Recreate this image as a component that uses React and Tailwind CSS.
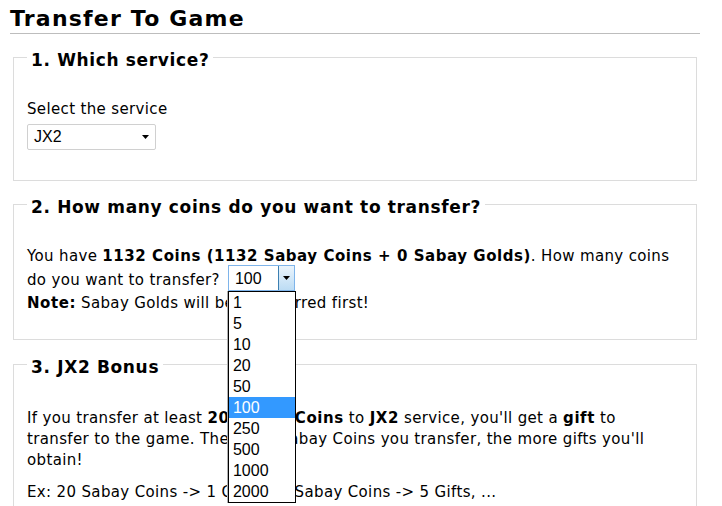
import React from "react";

const opts = ["1", "5", "10", "20", "50", "100", "250", "500", "1000", "2000"];

function Triangle() {
  return (
    <svg width="7" height="4" viewBox="0 0 7 4" className="block">
      <polygon points="0,0 7,0 3.5,4" fill="#000" />
    </svg>
  );
}

function B({ children }) {
  return <b className="font-bold tracking-[0.55px]">{children}</b>;
}

export default function App() {
  return (
    <div className="bg-white w-[722px] h-[506px] overflow-hidden text-black font-['DejaVu_Sans',Verdana,sans-serif]">
      <div className="pl-[10px] pr-[22px]">
        <h1 className="text-[22px] font-bold tracking-[1.2px] leading-[26px] pt-[6px] pb-[1px] border-b border-[#bdbdbd]">
          Transfer To Game
        </h1>

        <fieldset className="mt-[9px] mx-[3px] border border-[#dcdcdc] pl-[13px] pr-[15px] pb-[30px]">
          <legend className="px-[4px] pt-[6px] text-[17px] font-bold tracking-[0.65px] leading-[22px]">1. Which service?</legend>
          <div className="pt-[27px] text-[15px] tracking-[0.35px] leading-[22px]">Select the service</div>
          <div className="mt-[4px] w-[129px] h-[26px] border border-[#d0d0d0] rounded-[2px] flex items-center justify-between pl-[6px] pr-[6px] font-['Liberation_Sans',Arial,sans-serif] text-[16px]">
            <span>JX2</span>
            <Triangle />
          </div>
        </fieldset>

        <fieldset className="mt-[9px] mx-[3px] border border-[#dcdcdc] pl-[13px] pr-[15px] pb-[25px]">
          <legend className="px-[4px] pt-[6px] text-[17px] font-bold tracking-[0.65px] leading-[22px]">2. How many coins do you want to transfer?</legend>
          <div className="pt-[28px] text-[15px] tracking-[0.35px] leading-[21px]">
            You have <B>1132 Coins (1132 Sabay Coins + 0 Sabay Golds)</B>. How many coins do you want to transfer?{" "}
            <span className="relative -top-[2px] inline-block align-middle ml-[3px] tracking-normal">
              <span className="w-[67px] h-[26px] border border-[#7eb4ea] flex items-center font-['Liberation_Sans',Arial,sans-serif] text-[16px]">
                <span className="flex-1 pl-[6px]">100</span>
                <span className="w-[16px] h-[24px] border-l border-[#3c7fb1] bg-gradient-to-b from-[#eaf4fc] to-[#bcdcf4] flex items-center justify-center">
                  <Triangle />
                </span>
              </span>
              <span className="absolute left-0 top-[26px] w-[68px] bg-white border border-black shadow-[-1px_0_0_#b0b0b0] z-10 font-['Liberation_Sans',Arial,sans-serif] text-[16px]">
                {opts.map((o) => (
                  <span
                    key={o}
                    className={
                      "block h-[21px] leading-[21px] pl-[4px] " +
                      (o === "100" ? "bg-[#3399ff] text-white" : "")
                    }
                  >
                    {o}
                  </span>
                ))}
              </span>
            </span>
            <br />
            <B>Note:</B> Sabay Golds will be transferred first!
          </div>
        </fieldset>

        <fieldset className="mt-[10px] mx-[3px] border border-[#dcdcdc] pl-[13px] pr-[15px] pb-[29px]">
          <legend className="px-[4px] pt-[6px] text-[17px] font-bold tracking-[0.65px] leading-[22px]">3. JX2 Bonus</legend>
          <div className="pt-[30px] text-[15px] tracking-[0.35px] leading-[21px]">
            <p>
              If you transfer at least <B>20 Sabay Coins</B> to <B>JX2</B> service, you'll get a <B>gift</B> to transfer to the game. The more Sabay Coins you transfer, the more gifts you'll obtain!
            </p>
            <p className="mt-[11px]">Ex: 20 Sabay Coins -&gt; 1 Gift, 100 Sabay Coins -&gt; 5 Gifts, ...</p>
          </div>
        </fieldset>
      </div>
    </div>
  );
}
